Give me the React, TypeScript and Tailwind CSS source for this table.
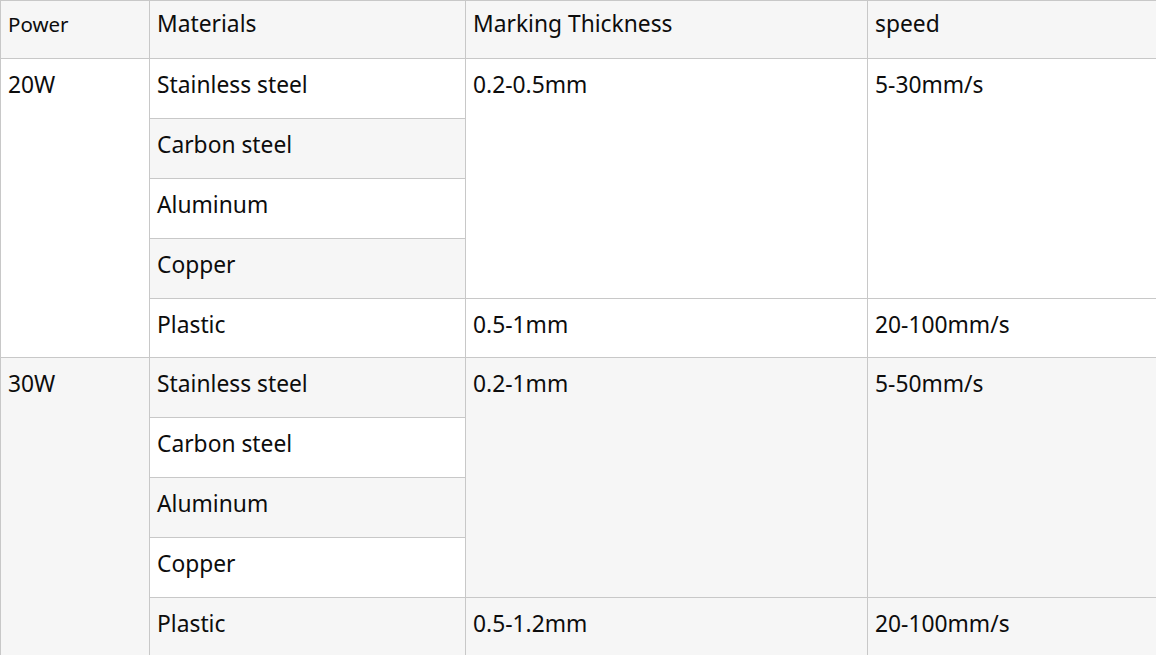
import React from "react";

type Group = {
  power: string;
  bgOdd: string;
  bgEven: string;
  rows: string[];
  thick: string;
  speed: string;
  plasticThick: string;
  plasticSpeed: string;
};

const groups: Group[] = [
  {
    power: "20W",
    bgOdd: "bg-white",
    bgEven: "bg-[#f6f6f6]",
    rows: ["Stainless steel", "Carbon steel", "Aluminum", "Copper"],
    thick: "0.2-0.5mm",
    speed: "5-30mm/s",
    plasticThick: "0.5-1mm",
    plasticSpeed: "20-100mm/s",
  },
  {
    power: "30W",
    bgOdd: "bg-[#f6f6f6]",
    bgEven: "bg-white",
    rows: ["Stainless steel", "Carbon steel", "Aluminum", "Copper"],
    thick: "0.2-1mm",
    speed: "5-50mm/s",
    plasticThick: "0.5-1.2mm",
    plasticSpeed: "20-100mm/s",
  },
];

const cell = "border border-[#c8c8c8] align-top px-[7px] pt-[11px] text-left font-normal";
const head = "border border-[#c8c8c8] align-top px-[7px] pt-[8px] text-left font-normal";

export default function App() {
  return (
    <div className="w-[1156px] h-[655px] overflow-hidden bg-white text-[#0d0d0d] text-[22.8px] leading-[30px] font-['Noto_Sans',sans-serif]">
      <table className="border-collapse table-fixed w-[1156px]">
        <colgroup>
          <col className="w-[149px]" />
          <col className="w-[316px]" />
          <col className="w-[402px]" />
          <col className="w-[289px]" />
        </colgroup>
        <thead>
          <tr className="h-[58px] bg-[#f6f6f6]">
            <th className={`${head} text-[20.5px]`}>Power</th>
            <th className={head}>Materials</th>
            <th className={head}>Marking Thickness</th>
            <th className={head}>speed</th>
          </tr>
        </thead>
        <tbody>
          {groups.map((g) => (
            <React.Fragment key={g.power}>
              {g.rows.map((m, i) => (
                <tr key={m} className={`h-[59.9px] ${i % 2 === 0 ? g.bgOdd : g.bgEven}`}>
                  {i === 0 && (
                    <td rowSpan={5} className={`${cell} ${g.bgOdd}`}>
                      {g.power}
                    </td>
                  )}
                  <td className={cell}>{m}</td>
                  {i === 0 && (
                    <>
                      <td rowSpan={4} className={`${cell} ${g.bgOdd}`}>
                        {g.thick}
                      </td>
                      <td rowSpan={4} className={`${cell} ${g.bgOdd}`}>
                        {g.speed}
                      </td>
                    </>
                  )}
                </tr>
              ))}
              <tr className={`h-[59.9px] ${g.bgOdd}`}>
                <td className={cell}>Plastic</td>
                <td className={cell}>{g.plasticThick}</td>
                <td className={cell}>{g.plasticSpeed}</td>
              </tr>
            </React.Fragment>
          ))}
        </tbody>
      </table>
    </div>
  );
}
